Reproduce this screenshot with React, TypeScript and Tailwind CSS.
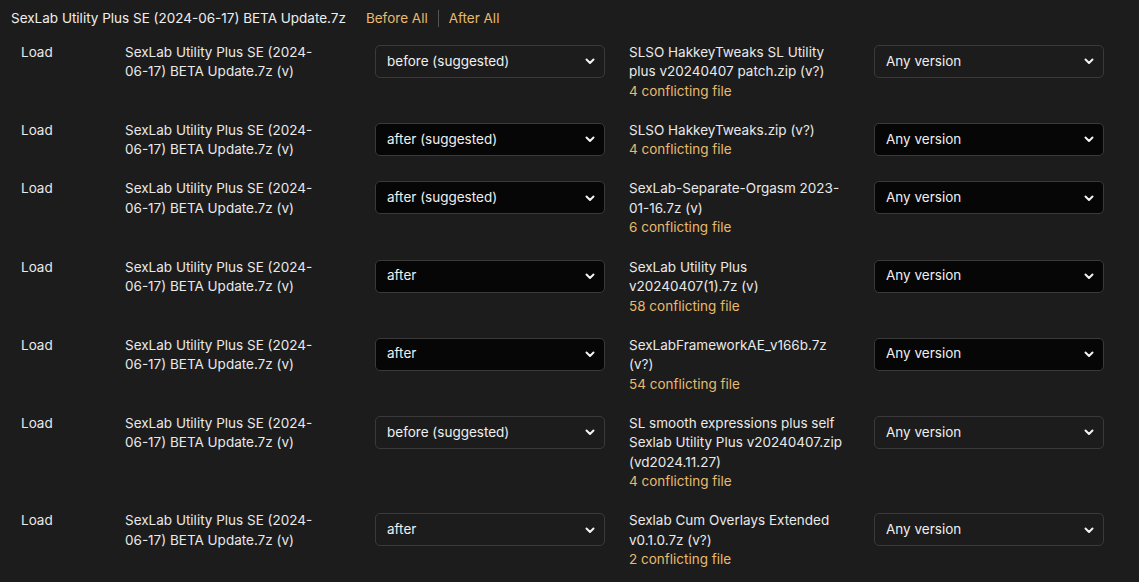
const rows = [
  { order: "before (suggested)", dark: false, mod: "SLSO HakkeyTweaks SL Utility plus v20240407 patch.zip (v?)", count: 4 },
  { order: "after (suggested)", dark: true, mod: "SLSO HakkeyTweaks.zip (v?)", count: 4 },
  { order: "after (suggested)", dark: true, mod: "SexLab-Separate-Orgasm 2023-01-16.7z (v)", count: 6 },
  { order: "after", dark: true, mod: "SexLab Utility Plus v20240407(1).7z (v)", count: 58 },
  { order: "after", dark: true, mod: "SexLabFrameworkAE_v166b.7z (v?)", count: 54 },
  { order: "before (suggested)", dark: false, mod: "SL smooth expressions plus self Sexlab Utility Plus v20240407.zip (vd2024.11.27)", count: 4 },
  { order: "after", dark: false, mod: "Sexlab Cum Overlays Extended v0.1.0.7z (v?)", count: 2 },
];

function Chevron() {
  return (
    <svg width="10" height="10" viewBox="0 0 10 10" className="shrink-0">
      <path d="M1.5 3.5 L5 7 L8.5 3.5" fill="none" stroke="#f2f2f2" strokeWidth="2" strokeLinecap="round" strokeLinejoin="round" />
    </svg>
  );
}

function FakeSelect({ value, dark }: { value: string; dark: boolean }) {
  return (
    <div
      className={`mt-[2px] flex h-[33px] w-[230px] items-center justify-between rounded-[5px] border border-[#3a3a3a] pl-[11px] pr-[9px] text-[#efefef] ${
        dark ? "bg-[#060606]" : "bg-[#1c1c1c]"
      }`}
    >
      <span>{value}</span>
      <Chevron />
    </div>
  );
}

export default function App() {
  return (
    <div className="min-h-screen bg-[#1c1c1c] text-[13.5px] leading-[19.5px] text-[#e9e9e9] font-['Inter','Noto_Sans',sans-serif]">
      {/* Header */}
      <div className="flex items-center pl-[11px] pt-[9px]">
        <span className="text-[#efefef]">SexLab Utility Plus SE (2024-06-17) BETA Update.7z</span>
        <span className="ml-[20px] text-[#e8ba6f]">Before All</span>
        <span className="mx-[10px] h-[17px] w-px bg-[#555]" />
        <span className="text-[#e8ba6f]">After All</span>
      </div>

      {/* Rules */}
      <div className="flex flex-col pt-[4.5px]">
        {rows.map((r, i) => (
          <div
            key={i}
            className="grid grid-cols-[104px_250px_254px_245px_231px] items-start py-[9.8px] pl-[21px]"
          >
            <div>Load</div>
            <div className="w-[210px]">SexLab Utility Plus SE (2024-06-17) BETA Update.7z (v)</div>
            <FakeSelect value={r.order} dark={r.dark} />
            <div className="w-[220px]">
              <div>{r.mod}</div>
              <div className="text-[#e8ba6f]">{r.count} conflicting file</div>
            </div>
            <FakeSelect value="Any version" dark={r.dark} />
          </div>
        ))}
      </div>
    </div>
  );
}
